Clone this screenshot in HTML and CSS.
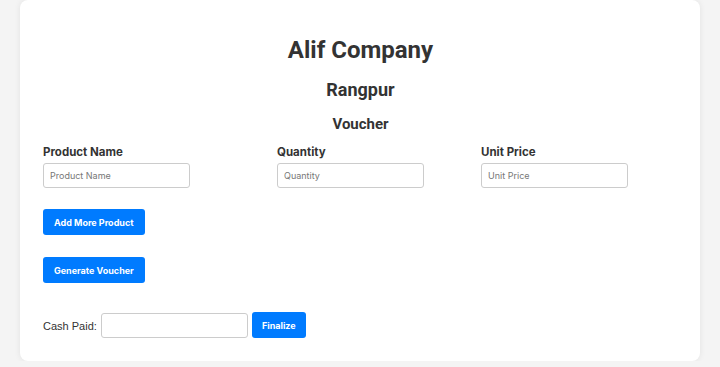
FILE: index.html
```html
<!DOCTYPE html>
<html>
<head>
<meta charset="utf-8">
<link rel="stylesheet" href="styles.css">
</head>
<body>
<div class="card">
  <h1 class="title">Alif Company</h1>
  <h2 class="branch">Rangpur</h2>
  <h3 class="doc">Voucher</h3>
  <div class="fields">
    <div class="field">
      <label class="label">Product Name</label>
      <input class="input" type="text" placeholder="Product Name">
    </div>
    <div class="field">
      <label class="label">Quantity</label>
      <input class="input" type="text" placeholder="Quantity">
    </div>
    <div class="field">
      <label class="label">Unit Price</label>
      <input class="input" type="text" placeholder="Unit Price">
    </div>
  </div>
  <div class="actions">
    <button class="btn">Add More Product</button>
    <button class="btn">Generate Voucher</button>
  </div>
  <div class="cash">
    <span class="cash-label">Cash Paid:</span>
    <input class="input" type="text">
    <button class="btn btn-final">Finalize</button>
  </div>
</div>
</body>
</html>
```
FILE: styles.css
```css
html, body {
  margin: 0;
  padding: 0;
  background: #f4f4f4;
}
body {
  font-family: Roboto, "Liberation Sans", sans-serif;
  color: #333;
}
.card {
  width: 680px;
  box-sizing: border-box;
  margin: 0 auto;
  background: #fff;
  border-radius: 8px;
  box-shadow: 0 0 6px rgba(0,0,0,0.08);
  padding: 35px 22px 23px 23px;
}
.title {
  margin: 0;
  text-align: center;
  font-size: 24px;
  line-height: 30px;
  font-weight: 700;
  color: #333;
}
.branch {
  margin: 14px 0 0;
  text-align: center;
  font-size: 18px;
  line-height: 22px;
  font-weight: 700;
  color: #333;
}
.doc {
  margin: 14px 0 0;
  text-align: center;
  font-size: 15px;
  line-height: 19px;
  font-weight: 700;
  color: #333;
}
.fields {
  display: grid;
  grid-template-columns: 234px 204px 1fr;
  margin-top: 11px;
}
.field {
  display: flex;
  flex-direction: column;
  align-items: flex-start;
  gap: 4px;
}
.label {
  font-family: Inter, "Liberation Sans", sans-serif;
  font-weight: 700;
  font-size: 11.5px;
  line-height: 14px;
  color: #333;
}
.input {
  width: 147px;
  height: 25px;
  box-sizing: border-box;
  border: 1px solid #ccc;
  border-radius: 3px;
  padding: 0 6px;
  font-family: Inter, "Liberation Sans", sans-serif;
  font-size: 9px;
  color: #333;
  background: #fff;
  outline: none;
  margin: 0;
}
.input::placeholder {
  color: #777;
}
.actions {
  display: flex;
  flex-direction: column;
  align-items: flex-start;
  gap: 22px;
  margin-top: 21px;
}
.btn {
  font-family: Inter, Roboto, "Liberation Sans", sans-serif;
  font-weight: 700;
  font-size: 9px;
  height: 26px;
  padding: 0 11px;
  border: none;
  border-radius: 3px;
  background: #007bff;
  color: #fff;
  margin: 0;
}
.cash {
  display: flex;
  align-items: center;
  gap: 4px;
  margin-top: 30px;
}
.cash-label {
  font-family: "Liberation Sans", Arial, sans-serif;
  font-size: 11px;
  color: #333;
}
.btn-final {
  width: 54px;
  height: 26px;
  padding: 0;
  margin-top: -1px;
}
```
